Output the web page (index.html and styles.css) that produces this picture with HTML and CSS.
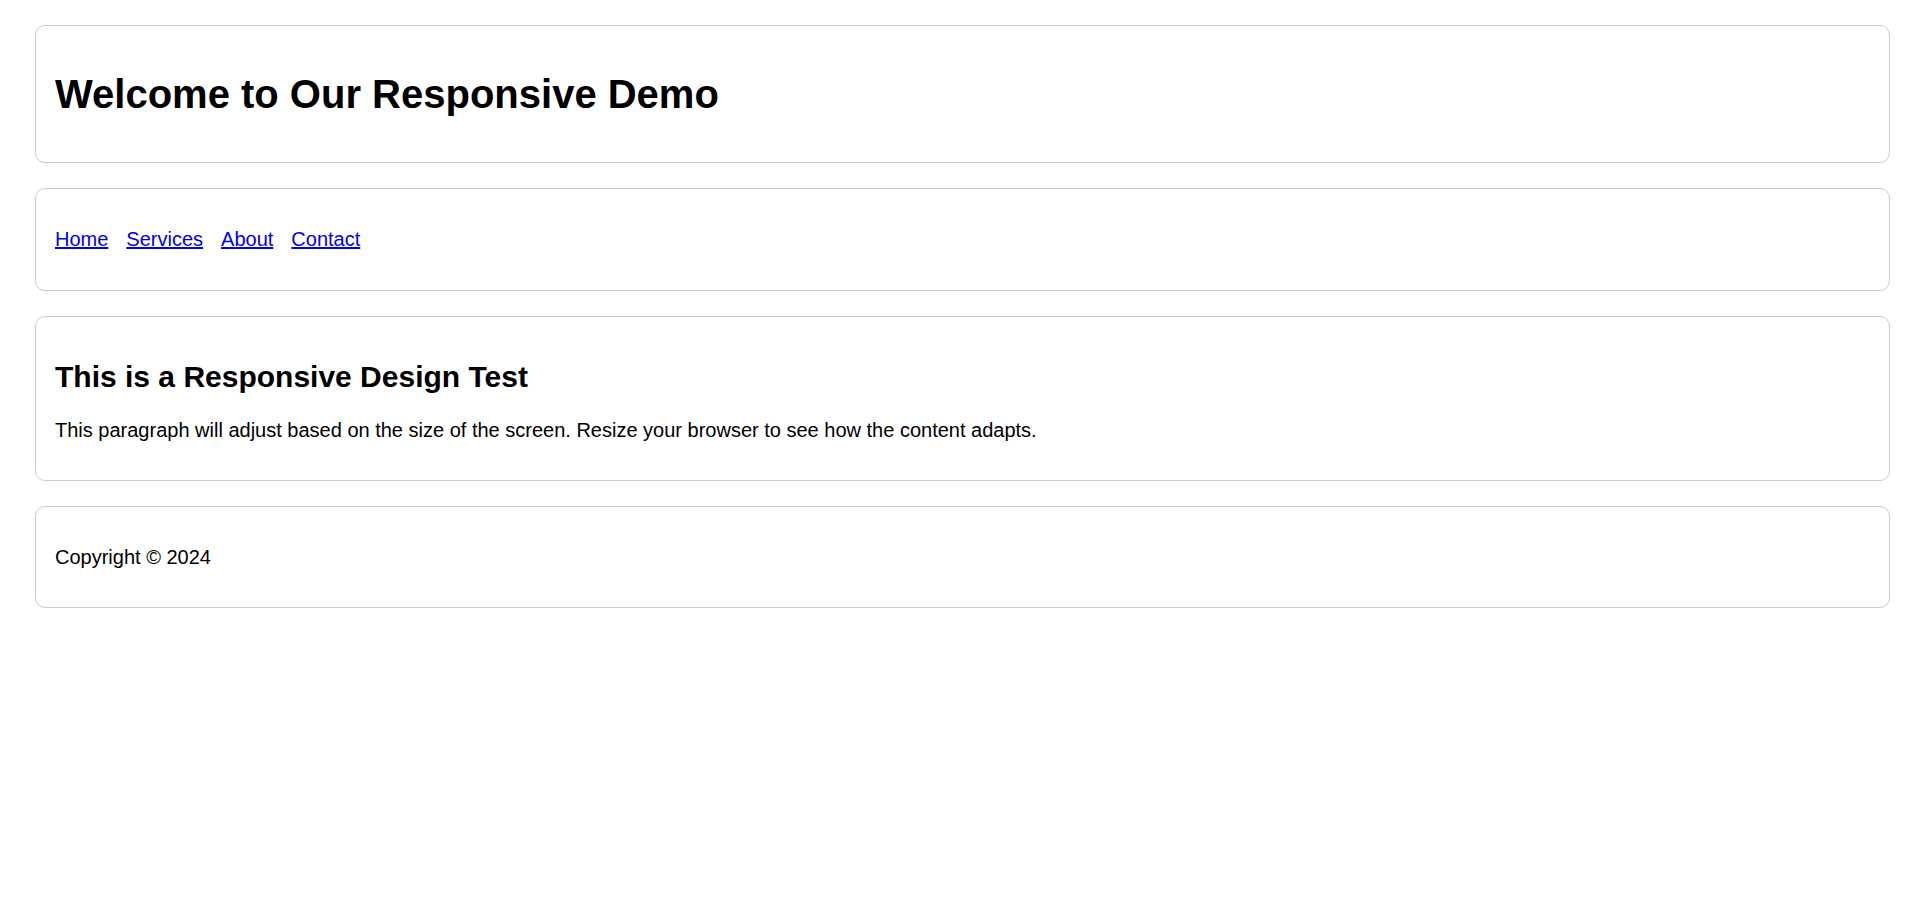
FILE: index.html
```
<!DOCTYPE html>
<html lang="en">
<head>
<meta charset="utf-8">
<title>Responsive Demo</title>
<link rel="stylesheet" href="styles.css">
</head>
<body>
<header class="box">
  <h1 class="title">Welcome to Our Responsive Demo</h1>
</header>
<nav class="box">
  <ul class="nav-list">
    <li><a href="#">Home</a></li>
    <li><a href="#">Services</a></li>
    <li><a href="#">About</a></li>
    <li><a href="#">Contact</a></li>
  </ul>
</nav>
<main class="box">
  <h2 class="subtitle">This is a Responsive Design Test</h2>
  <p class="text">This paragraph will adjust based on the size of the screen. Resize your browser to see how the content adapts.</p>
</main>
<footer class="box">
  <p class="text">Copyright © 2024</p>
</footer>
</body>
</html>
```
FILE: styles.css
```
html, body {
  background: #ffffff;
}
body {
  margin: 0;
  padding: 25px 35px;
  font-family: "Liberation Sans", Arial, sans-serif;
  font-size: 20px;
  color: #000;
}
.box {
  display: block;
  border: 1px solid #cccccc;
  border-radius: 10px;
  padding: 19px;
  margin-bottom: 25px;
}
.title {
  font-size: 40px;
  font-weight: bold;
  line-height: 44px;
  margin: 27px 0;
}
.nav-list {
  list-style: none;
  margin: 20px 0 21px;
  padding: 0;
  display: flex;
  gap: 18px;
  line-height: 22px;
}
.nav-list a {
  color: #0000ee;
  text-decoration: underline;
}
.subtitle {
  font-size: 30px;
  font-weight: bold;
  line-height: 36px;
  margin: 23px 0 24px;
}
.text {
  margin: 20px 0;
  line-height: 22px;
}
```
